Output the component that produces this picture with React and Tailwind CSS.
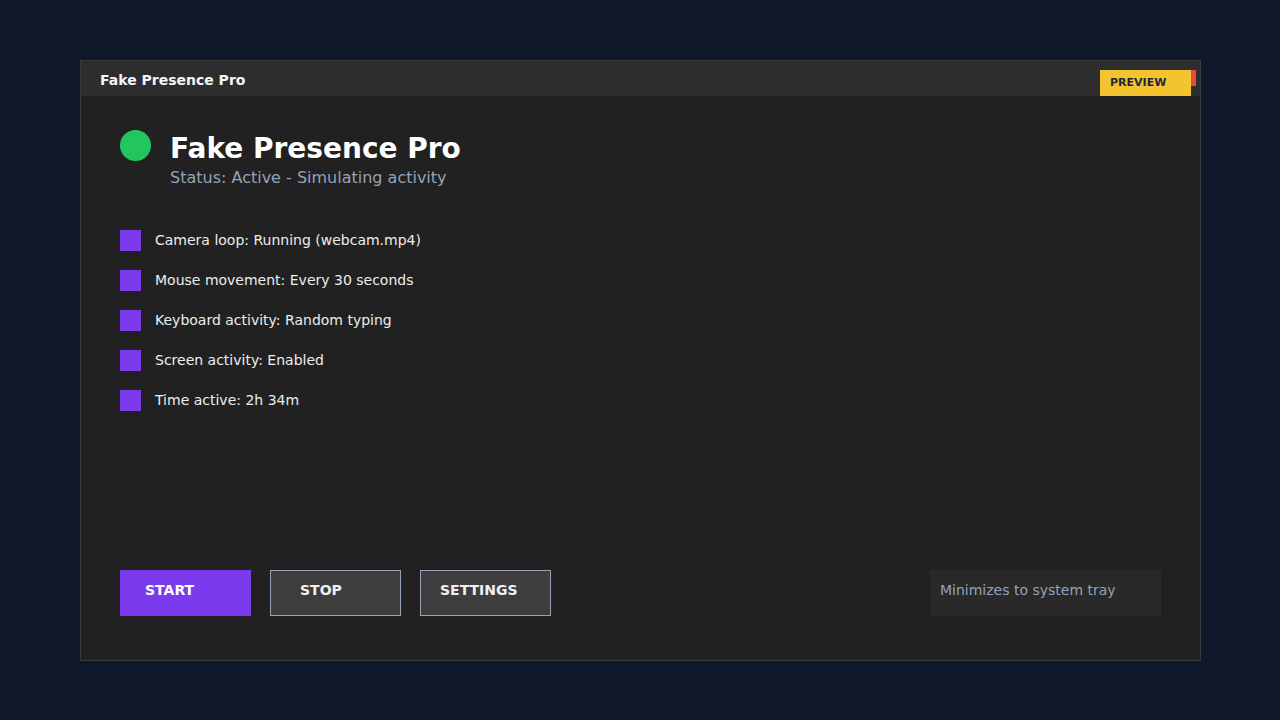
import React from "react";

const items = [
  "Camera loop: Running (webcam.mp4)",
  "Mouse movement: Every 30 seconds",
  "Keyboard activity: Random typing",
  "Screen activity: Enabled",
  "Time active: 2h 34m",
];

const App = () => {
  return (
    <div className="min-h-[720px] w-full bg-[#0f172a] pt-[60px] px-[80px] font-['DejaVu_Sans',sans-serif]">
      <div className="relative flex h-[601px] w-[1121px] flex-col border border-[#3a3a3a] bg-[#212121]">
        {/* title bar */}
        <div className="h-[35px] bg-[#2d2d2d] pl-[19px] pt-[9px] text-[14px] leading-5 font-bold text-[#f5f5f5]">
          Fake Presence Pro
        </div>

        <div className="absolute top-[9px] right-[4px] h-[16px] w-[10px] bg-[#ef4444]" />
        <div className="absolute top-[9px] right-[9px] h-[26px] w-[91px] bg-[#f4c430] pl-[10px] pt-[5px] text-[11px] leading-4 font-bold text-[#1e293b]">
          PREVIEW
        </div>

        {/* body */}
        <div className="flex flex-1 flex-col px-[39px] pt-[34px] pb-[44px]">
          <div className="flex items-start gap-[19px]">
            <div className="h-[31px] w-[31px] rounded-full bg-[#22c55e]" />
            <div className="mt-[2px]">
              <h1 className="text-[28px] leading-[34px] font-bold text-white">Fake Presence Pro</h1>
              <p className="text-[16px] leading-6 text-[#94a3b8]">Status: Active - Simulating activity</p>
            </div>
          </div>

          <div className="mt-10 flex flex-col gap-[19px]">
            {items.map((item) => (
              <div key={item} className="flex h-[21px] items-center gap-[14px]">
                <div className="h-[21px] w-[21px] bg-[#7c3aed]" />
                <span className="mb-[2px] text-[14px] leading-5 text-[#ededed]">{item}</span>
              </div>
            ))}
          </div>

          <div className="mt-auto flex items-start justify-between">
            <div className="flex gap-[19px]">
              <div className="h-[46px] w-[131px] cursor-pointer border border-[#7c3aed] bg-[#7c3aed] pl-[24px] pt-[9px] text-[14px] leading-5 font-bold text-white">
                START
              </div>
              <div className="h-[46px] w-[131px] cursor-pointer border border-[#94a3b8] bg-[#3d3d3d] pl-[29px] pt-[9px] text-[14px] leading-5 font-bold text-[#f0f0f0]">
                STOP
              </div>
              <div className="h-[46px] w-[131px] cursor-pointer border border-[#94a3b8] bg-[#3d3d3d] pl-[19px] pt-[9px] text-[14px] leading-5 font-bold text-[#f0f0f0]">
                SETTINGS
              </div>
            </div>
            <div className="h-[46px] w-[231px] bg-[#292929] pl-[10px] pt-[10px] text-[14px] leading-5 text-[#94a3b8]">
              Minimizes to system tray
            </div>
          </div>
        </div>
      </div>
    </div>
  );
};

export default App;
